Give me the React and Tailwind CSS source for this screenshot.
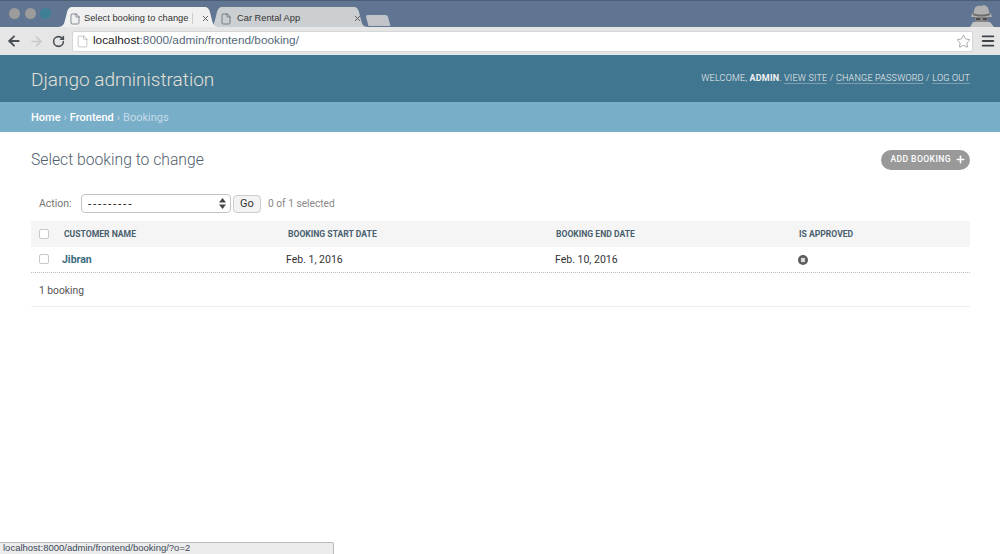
import { ArrowLeft, ArrowRight, RotateCw, Star, X, Menu, File, Plus } from 'lucide-react';

const roboto = "font-['Roboto','Liberation_Sans',sans-serif]";

const TabShape = ({ fill }) => (
  <svg className="absolute inset-0 w-full h-full" viewBox="0 0 160 20" preserveAspectRatio="none">
    <path d="M0 20 C5 20 6 17 7 13 L9 5 C10 2 11 0 15 0 L145 0 C149 0 150 2 151 5 L153 13 C154 17 155 20 160 20 Z" fill={fill} />
  </svg>
);

const Tab = ({ title, active }) => (
  <div className={`relative h-[20px] flex items-center pt-[3px] ${active ? 'w-[161px] z-10' : 'w-[160px] -ml-[11px]'}`}>
    <TabShape fill={active ? '#f0f0f0' : '#cbcfd1'} />
    <File size={12} strokeWidth={1.3} className={`relative text-[#4a5560] shrink-0 ${active ? 'ml-[11px]' : 'ml-[12px]'}`} />
    <span className={`relative text-[9.3px] text-[#333] whitespace-nowrap font-['Liberation_Sans',sans-serif] ${active ? 'ml-[3px] w-[110px]' : 'ml-[5px] w-[106px]'}`}>{title}</span>
    {active && <span className="relative w-px h-[11px] bg-[#ccc] -ml-[2px]" />}
    <X size={9} strokeWidth={2.4} className={`relative text-[#555] shrink-0 ${active ? 'ml-[8px]' : 'ml-[10px]'}`} />
  </div>
);

const Incognito = () => (
  <svg className="absolute right-[5px] bottom-0" width="27" height="23" viewBox="0 0 27 23">
    <path d="M6 8 C6 3 9 1 13 2 C17 0 21 3 21 8 L23 10 L24 13 L3 13 L4 10 Z" fill="#b0b0b0" />
    <path d="M5 9 C10 11 17 11 22 9 L22 11 C17 13 10 13 5 11 Z" fill="#6c6c6c" />
    <path d="M7 13 L20 13 L20 18 L16 20 L11 20 L7 18 Z" fill="#858585" />
    <path d="M8 14 H12 V16 H8 Z M15 14 H19 V16 H15 Z" fill="#4a4a4a" />
    <path d="M2 23 L5 18 L22 18 L26 23 Z" fill="#c4c4c4" />
  </svg>
);

const BrowserChrome = () => (
  <div className="h-[55px] shrink-0 flex flex-col font-['Liberation_Sans',sans-serif] relative">
    <div className="h-[27px] bg-[#5f7592] border-t border-[#4b6076] flex items-end pl-[9px] relative">
      <div className="flex self-start mt-[7px] mr-[7px]">
        <span className="w-[11px] h-[11px] rounded-full bg-[#9c9c9c]" />
        <span className="ml-[5px] w-[11px] h-[11px] rounded-full bg-[#9c9c9c]" />
        <span className="ml-[4px] w-[11px] h-[11px] rounded-full bg-[#3f7f96]" />
      </div>
      <Tab title="Select booking to change" active />
      <Tab title="Car Rental App" />
      <div className="w-[22px] h-[11px] mb-[1px] -ml-[1px] bg-[#c0c4c8] rounded-t-[2px] skew-x-[15deg]" />
      <Incognito />
    </div>
    <div className="h-[28px] bg-[#e6e6e6] flex items-center pl-[6px] pr-[4px]">
      <ArrowLeft size={16} strokeWidth={2.8} className="text-[#4a4f55] shrink-0" />
      <ArrowRight size={15} strokeWidth={2.5} className="ml-[7px] text-[#c8c8c8] shrink-0" />
      <RotateCw size={13} strokeWidth={2.8} className="ml-[8px] text-[#4a4f55] shrink-0" />
      <div className="ml-[7px] flex-1 h-[21px] bg-white rounded-[2px] border border-[#d6d6d6] flex items-center pl-[3px] pr-[1px]">
        <File size={13} strokeWidth={1} className="text-[#999] shrink-0" />
        <span className="ml-[4px] text-[11.8px] text-[#55687a]"><span className="text-[#222]">localhost</span>:8000/admin/frontend/booking/</span>
        <Star size={15} strokeWidth={1} className="ml-auto text-[#777]" />
      </div>
      <Menu size={16} strokeWidth={2.8} className="ml-[7px] text-[#3f444a] shrink-0" />
    </div>
  </div>
);

const Header = () => (
  <div className="h-[47px] shrink-0 bg-[#417690] flex items-center justify-between pl-[31px] pr-[30px] pt-[4px]">
    <span className="text-[19px] font-light text-[#e4e0d8]">Django administration</span>
    <span className="text-[9px] uppercase tracking-[0.2px] text-[#f2f2f2] font-light mb-[3px]">
      Welcome, <strong className="font-bold">admin</strong>.{' '}
      <a className="border-b border-[#7f9db0]">View site</a> /{' '}
      <a className="border-b border-[#7f9db0]">Change password</a> /{' '}
      <a className="border-b border-[#7f9db0]">Log out</a>
    </span>
  </div>
);

const Breadcrumbs = () => (
  <div className="h-[30px] shrink-0 bg-[#79aec8] flex items-center pl-[31px] pt-[2px] text-[11px] text-[#c4dce8]">
    <span className="text-white font-medium">Home</span>
    <span className="mx-[3px]">›</span>
    <span className="text-white font-medium">Frontend</span>
    <span className="mx-[3px]">›</span>
    <span>Bookings</span>
  </div>
);

const ActionBar = () => (
  <div className="flex items-center h-[22px] pl-[8px] text-[10.5px] text-[#777] mt-[21px]">
    <span className="w-[42px]">Action:</span>
    <div className="w-[150px] h-[19px] border border-[#c4c4c4] rounded-[4px] flex items-center justify-between pl-[6px] pr-[4px] text-[#333] bg-white">
      <span className="text-[12px] tracking-[1.7px]">---------</span>
      <svg width="7" height="11" viewBox="0 0 7 11">
        <path d="M3.5 0 L7 4.5 H0 Z M3.5 11 L0 6.5 H7 Z" fill="#444" />
      </svg>
    </div>
    <button className="ml-[2px] w-[28px] h-[18px] bg-[#f3f3f3] border border-[#ccc] rounded-[4px] text-[11px] text-[#333]">Go</button>
    <span className="ml-[7px] text-[10.2px] text-[#888]">0 of 1 selected</span>
  </div>
);

const columns = 'grid grid-cols-[23px_226px_268px_243px_179px]';

const Checkbox = () => <span className="ml-[8px] w-[10px] h-[10px] border border-[#c8c8c8] rounded-[2px] bg-white" />;

const BookingTable = () => (
  <div className="mt-[6px] text-[#333]">
    <div className={`${columns} h-[26px] bg-[#f5f5f5] items-center text-[8.6px] font-bold uppercase text-[#4a5f6e]`}>
      <Checkbox />
      <span className="pl-[10px] pt-[2px]">Customer name</span>
      <span className="pl-[8px] pt-[2px]">Booking start date</span>
      <span className="pl-[8px] pt-[2px]">Booking end date</span>
      <span className="pl-[8px] pt-[2px]">Is approved</span>
    </div>
    <div className={`${columns} h-[26px] items-center text-[10.5px] border-b border-dotted border-[#bbb]`}>
      <Checkbox />
      <span className="pl-[8px] pt-[1px] font-bold text-[#3b6a80]">Jibran</span>
      <span className="pl-[6px] pt-[1px]">Feb. 1, 2016</span>
      <span className="pl-[7px] pt-[1px]">Feb. 10, 2016</span>
      <span className="pl-[7px] pt-[1px]">
        <svg width="10" height="10" viewBox="0 0 10 10" className="block">
          <circle cx="5" cy="5" r="5" fill="#5c5c5c" />
          <path d="M3.3 3.3 L6.7 6.7 M6.7 3.3 L3.3 6.7" stroke="#e6e6e6" strokeWidth="2" />
        </svg>
      </span>
    </div>
    <div className="h-[34px] flex items-center pl-[8px] pt-[3px] text-[10.3px] text-[#555] border-b border-[#eee]">1 booking</div>
  </div>
);

export default function App() {
  return (
    <div className={`relative h-[554px] w-[1000px] overflow-hidden bg-white flex flex-col ${roboto}`}>
      <BrowserChrome />
      <Header />
      <Breadcrumbs />
      <div className="pr-[30px] pl-[31px] flex-1">
        <div className="flex items-center justify-between mt-[16px]">
          <h1 className="text-[15.7px] font-light text-[#51606e]">Select booking to change</h1>
          <button className="h-[20px] rounded-full bg-[#999] pl-[9px] pr-[4px] flex items-center text-[8.6px] font-medium uppercase tracking-[0.4px] text-white">
            Add booking
            <Plus size={11} strokeWidth={3.5} className="ml-[4px]" />
          </button>
        </div>
        <ActionBar />
        <BookingTable />
      </div>
      <div className="absolute left-0 bottom-0 w-[334px] h-[12px] bg-[#ececec] border-t border-r border-[#bbb] rounded-tr-[2px] pl-[3px] flex items-center text-[9.5px] text-[#3c4a5a] font-['Liberation_Sans',sans-serif]">
        localhost:8000/admin/frontend/booking/?o=2
      </div>
    </div>
  );
}
